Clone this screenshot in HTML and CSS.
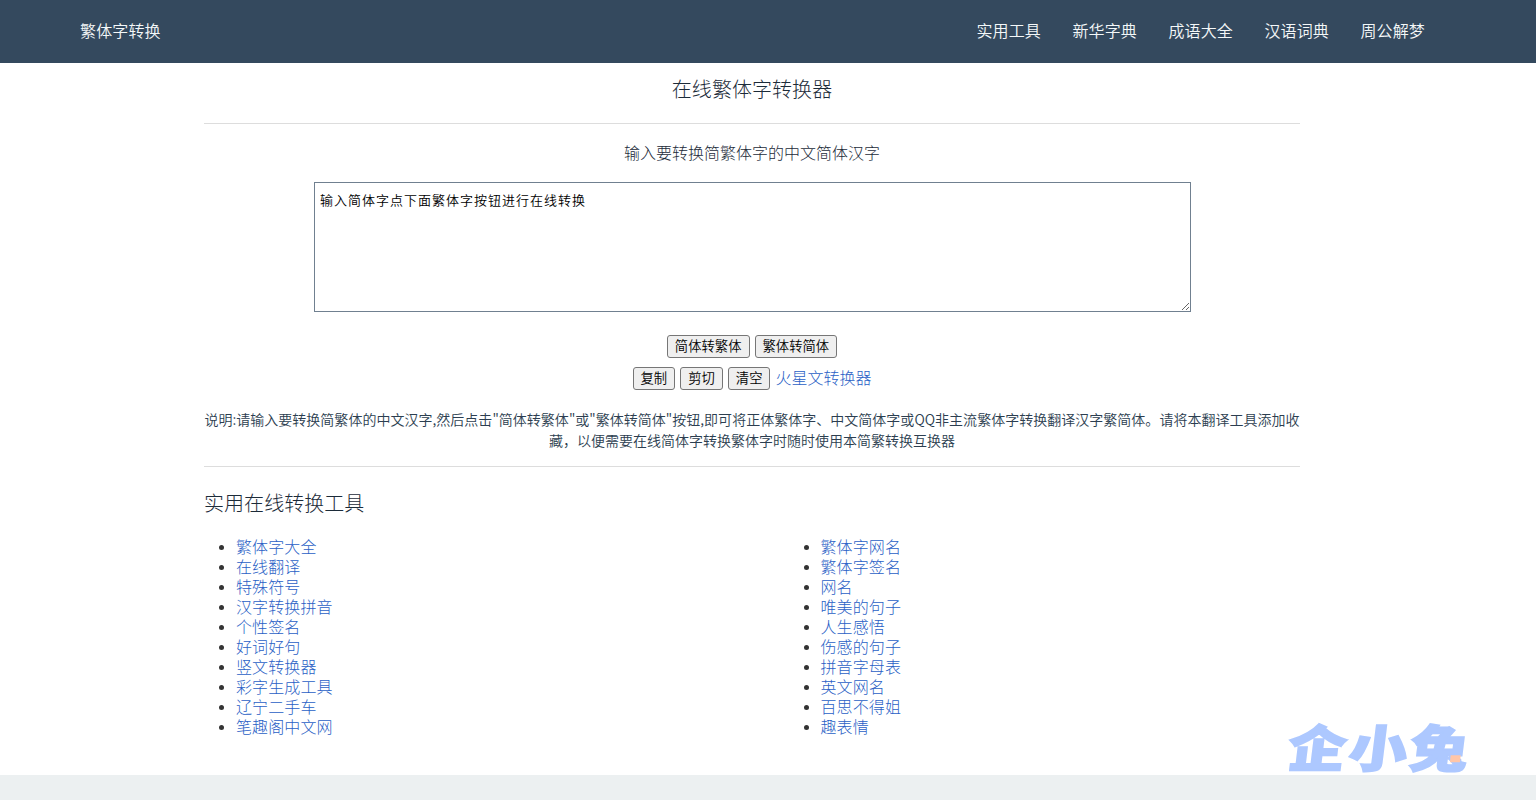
FILE: index.html
```html
<!DOCTYPE html>
<html lang="zh-CN">
<head>
<meta charset="utf-8">
<title>繁体字转换</title>
<link rel="stylesheet" href="styles.css">
</head>
<body>
<header class="site-header">
  <a class="brand" href="#">繁体字转换</a>
  <nav class="nav"><a href="#">实用工具</a><a href="#">新华字典</a><a href="#">成语大全</a><a href="#">汉语词典</a><a href="#">周公解梦</a></nav>
</header>
<main class="page">
  <div class="content">
    <h1 class="title">在线繁体字转换器</h1>
    <p class="lead">输入要转换简繁体字的中文简体汉字</p>
    <textarea class="input" spellcheck="false">输入简体字点下面繁体字按钮进行在线转换</textarea>
    <div class="actions"><button>简体转繁体</button><button>繁体转简体</button></div>
    <div class="actions second"><button>复制</button><button>剪切</button><button>清空</button><a href="#">火星文转换器</a></div>
    <p class="note"><span>说明:请输入要转换简繁体的中文汉字,然后点击"简体转繁体"或"繁体转简体"按钮,即可将正体繁体字、中文简体字或QQ非主流繁体字转换翻译汉字繁简体。请将本翻译工具添加收</span><br>藏，以便需要在线简体字转换繁体字时随时使用本简繁转换互换器</p>
    <h2 class="subtitle">实用在线转换工具</h2>
    <div class="lists">
      <ul>
        <li><a href="#">繁体字大全</a></li><li><a href="#">在线翻译</a></li><li><a href="#">特殊符号</a></li><li><a href="#">汉字转换拼音</a></li><li><a href="#">个性签名</a></li><li><a href="#">好词好句</a></li><li><a href="#">竖文转换器</a></li><li><a href="#">彩字生成工具</a></li><li><a href="#">辽宁二手车</a></li><li><a href="#">笔趣阁中文网</a></li>
      </ul>
      <ul>
        <li><a href="#">繁体字网名</a></li><li><a href="#">繁体字签名</a></li><li><a href="#">网名</a></li><li><a href="#">唯美的句子</a></li><li><a href="#">人生感悟</a></li><li><a href="#">伤感的句子</a></li><li><a href="#">拼音字母表</a></li><li><a href="#">英文网名</a></li><li><a href="#">百思不得姐</a></li><li><a href="#">趣表情</a></li>
      </ul>
    </div>
  </div>
</main>
<div class="watermark"><span>企</span><span>小</span><span>兔</span><i></i></div>
</body>
</html>
```

FILE: styles.css
```css
* { box-sizing: border-box; }
body {
  margin: 0;
  height: 800px;
  overflow: hidden;
  position: relative;
  background: #ecf0f1;
  color: #2c3e50;
  font: 300 16px/20px "Noto Sans CJK SC", sans-serif;
}
a { color: #2a5fc6; text-decoration: none; }
.site-header {
  height: 63px;
  padding: 0 111px 3px 80px;
  display: flex;
  align-items: center;
  justify-content: space-between;
  background: #34495e;
}
.site-header a { color: #f4f8f9; font-weight: 350; letter-spacing: 0.15px; }
.nav { display: flex; gap: 31.4px; }
.page { height: 712px; background: #fff; }
.content { width: 1096px; margin-left: 204px; }
.title, .subtitle { margin: 0; font-size: 20px; font-weight: 300; color: #1c2b39; letter-spacing: 0.05px; }
.title {
  height: 61px;
  line-height: 52px;
  text-align: center;
  border-bottom: 1px solid #ddd;
}
.lead { margin: 18px 0 20px; text-align: center; color: #1c2b39; }
.input {
  display: block;
  width: 877px;
  height: 130px;
  margin: 0 auto 23px 110px;
  padding: 7px 5px;
  border: 1px solid #708090;
  border-radius: 0;
  outline: 0;
  background: #fff;
  color: #000;
  font: 350 13px/20px "Noto Sans CJK SC", sans-serif;
  letter-spacing: 1px;
}
.actions { display: flex; justify-content: center; align-items: center; gap: 5px; height: 23px; }
.second { margin-top: 9px; }
.second a { padding-bottom: 3px; }
.actions button {
  height: 23px;
  padding: 0 7px 1px;
  border: 1px solid #767676;
  border-radius: 3px;
  background: #efefef;
  color: #000;
  font: 350 13.333px/20px "Noto Sans CJK SC", sans-serif;
}
.note {
  margin: 19px 0 0;
  padding-bottom: 15px;
  border-bottom: 1px solid #ddd;
  font-size: 14px;
  font-weight: 350;
  line-height: 21px;
  text-align: center;
  white-space: nowrap;
}
.note span { letter-spacing: 0.02px; }
.subtitle { margin: 21px 0 18px; line-height: 30px; }
.lists { display: grid; grid-template-columns: 584.5px 1fr; }
.lists ul { margin: 0; padding-left: 32px; color: #333; list-style: none; }
.lists li { height: 20px; letter-spacing: 0.1px; }
.lists li::before {
  content: "";
  float: left;
  width: 5px;
  height: 5px;
  margin: 9px 12px 0 -17px;
  border-radius: 50%;
  background: #333;
}
.watermark {
  position: absolute;
  left: 1289px;
  top: 716px;
  display: flex;
  color: #adc8ff;
  font-size: 58px;
  font-weight: 900;
  line-height: 58px;
  -webkit-text-stroke: 2px #adc8ff;
  transform: skewX(-7deg) scaleY(0.86);
}
.watermark span { width: 61px; }
.watermark i {
  position: absolute;
  left: 163px;
  top: 41px;
  width: 10px;
  height: 8px;
  background: #ffc6a8;
}
```
